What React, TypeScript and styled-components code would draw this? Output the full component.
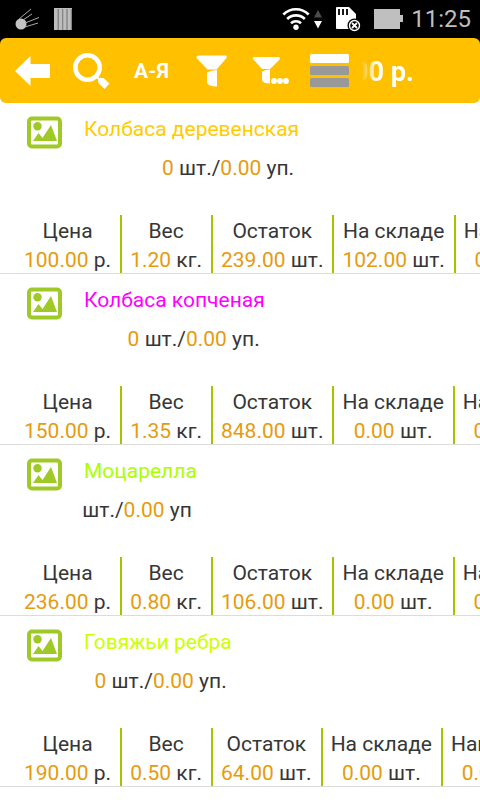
import React from "react";
import styled, { createGlobalStyle } from "styled-components";

const GlobalStyle = createGlobalStyle`
  body {
    margin: 0;
    background: #fff;
    color: #363636;
    font-family: Roboto, "Noto Sans", sans-serif;
    font-size: 21px;
    line-height: 29px;
  }
`;

const Screen = styled.div`
  min-height: 100vh;
  overflow: hidden;
`;

const Backdrop = styled.div`
  background: linear-gradient(#000 50%, #fff 50%);
`;

const StatusBar = styled.header`
  display: flex;
  align-items: center;
  height: 38px;
  padding: 0 9px 0 14px;
  background: #000;
`;

const StatusGroup = styled.div<{ $gap: number; $end?: boolean }>`
  display: flex;
  align-items: center;
  gap: ${(p) => p.$gap}px;
  margin-left: ${(p) => (p.$end ? "auto" : "0")};
`;

const Clock = styled.time`
  color: #bebebe;
  font-size: 24px;
  line-height: 36px;
`;

const Toolbar = styled.nav`
  display: flex;
  align-items: center;
  height: 65px;
  padding-left: 14px;
  border-radius: 6px;
  background: #ffc000;
`;

const ToolButton = styled.button<{ $gap: number }>`
  display: flex;
  align-items: center;
  flex: none;
  margin: 0 ${(p) => p.$gap}px 0 0;
  padding: 0;
  border: 0;
  background: none;
  color: #fff;
  font: bold 21px/30px Roboto, "Noto Sans", sans-serif;
  cursor: pointer;
`;

const Total = styled.output`
  display: flex;
  justify-content: flex-end;
  width: 53px;
  padding-top: 2px;
  overflow: hidden;
  color: #fff;
  font-size: 27px;
  font-weight: bold;
  line-height: 34px;
  white-space: nowrap;
  mask-image: linear-gradient(to right, transparent, #000 16px);
`;

const List = styled.ul`
  margin: 0;
  padding: 0;
  list-style: none;
`;

const Row = styled.li`
  border-bottom: 1px solid #dcdcdc;
`;

const Summary = styled.div`
  display: flex;
  align-items: flex-start;
  gap: 21px;
  height: 100px;
  padding: 12px 0 0 26px;
`;

const PictureButton = styled.button`
  display: block;
  flex: none;
  margin-top: 1px;
  padding: 0;
  border: 0;
  background: none;
  line-height: 0;
  cursor: pointer;
`;

const Info = styled.div`
  display: grid;
  gap: 10px;
`;

const Name = styled.h2<{ $color: string }>`
  margin: 0;
  color: ${(p) => p.$color};
  font-size: inherit;
  font-weight: normal;
  white-space: nowrap;
`;

const Quantity = styled.div`
  display: flex;
  justify-content: flex-end;
  width: 0;
  min-width: 100%;
  padding-right: 5px;
  box-sizing: border-box;
  white-space: pre;
`;

const Stats = styled.dl`
  display: flex;
  margin: 0;
  padding-left: 16px;
  overflow: hidden;
`;

const Stat = styled.div`
  flex: none;
  box-sizing: border-box;
  height: 58px;
  padding: 1px 9px 0 8px;
  text-align: center;
  white-space: nowrap;

  & + & {
    border-left: 2px solid #a4c400;
  }
`;

const Label = styled.dt`
  line-height: 30px;
`;

const Value = styled.dd`
  margin: 0;
`;

const Num = styled.span`
  color: #e69b0e;
`;

const SatelliteIcon = () => (
  <svg width="26" height="24" viewBox="0 0 26 24" fill="none" stroke="#aaa" strokeWidth="1">
    <circle cx="7" cy="17" r="5.5" fill="#c4c4c4" stroke="none" />
    <path d="M5 12 17 2M9 13l9-6M11 16l14-5.500M11 20l13-4" />
  </svg>
);

const BarsIcon = () => (
  <svg width="18" height="23" viewBox="0 0 18 23">
    <path fill="#bdbdbd" d="M0 0h18v22H0z" />
    <path fill="#858585" d="M3.5 1H5v21H3.5zM8 1h1.3v21H8zM12.3 1h1.4v21h-1.4zM16.8 1H18v21h-1.2z" />
  </svg>
);

const WifiIcon = () => (
  <svg width="28" height="24" viewBox="0 0 28 24" fill="none" stroke="#fff" strokeWidth="2.6">
    <path d="M1.3 7.500a18 18 0 0 1 25.400 0M5.200 12a12.500 12.500 0 0 1 17.600 0M9 16.300a7.200 7.200 0 0 1 10 0" />
    <circle cx="14" cy="20.300" r="2.700" fill="#fff" stroke="none" />
  </svg>
);

const TrafficIcon = () => (
  <svg width="8" height="20" viewBox="0 0 8 20">
    <path fill="#4c4c4c" d="M4 1l4 7.500H0z" />
    <path fill="#fff" d="M4 19.500L0 12h8z" />
  </svg>
);

const CardIcon = () => (
  <svg width="26" height="26" viewBox="0 0 26 26">
    <path fill="#fff" d="M2 1h12l7 7v15H2a1 1 0 0 1-1-1V2a1 1 0 0 1 1-1z" />
    <path stroke="#000" strokeWidth="1.800" d="M4 3v6M8 3v6M12 3v6" />
    <circle cx="19.500" cy="19.500" r="7" fill="#000" />
    <circle cx="19.500" cy="19.500" r="5" fill="#000" stroke="#fff" strokeWidth="1.400" />
    <path stroke="#fff" strokeWidth="1.800" d="M17 17l5 5M22 17l-5 5" />
  </svg>
);

const BatteryIcon = () => (
  <svg width="29" height="20" viewBox="0 0 29 20">
    <path fill="#bfbfbf" d="M0 0h26v6h3v7h-3v7H0z" />
  </svg>
);

const BackIcon = () => (
  <svg width="36" height="32" viewBox="0 0 36 32">
    <path fill="#fff" d="M1 16 16.500 1v8H36v14H16.500v8z" />
  </svg>
);

const SearchIcon = () => (
  <svg width="38" height="38" viewBox="0 0 38 38">
    <circle cx="15.500" cy="15.500" r="12.200" fill="none" stroke="#fff" strokeWidth="4.600" />
    <path stroke="#fff" strokeWidth="2" d="m24 24 5 5" />
    <path fill="#fff" d="M26 28.500q0-2 2-2.500h3.500l6 5.500-5 5.500-6-6z" />
  </svg>
);

const FilterIcon = () => (
  <svg width="32" height="32" viewBox="0 0 32 32" fill="#fff">
    <path d="M2 .5h28q1.800 1 .5 2.500L20.500 14.500h-9L.5 3Q0 1.500 2 .5z" />
    <path d="M11 17.500q4-2.500 10-2.500v16.500q-9 0-10-4z" />
  </svg>
);

const FilterMoreIcon = () => (
  <svg width="38" height="30" viewBox="0 0 38 30" fill="#fff">
    <path d="M2 1h25q1.500 1 .5 2.500L18 13h-8L1.500 3.500Q0 2 2 1z" />
    <path d="M10 15.500q4-2 8-2v14q-7 0-8-3.500z" />
    <circle cx="22" cy="25" r="2.900" />
    <circle cx="28" cy="25" r="2.900" />
    <circle cx="34" cy="25" r="2.900" />
  </svg>
);

const RowsIcon = () => (
  <svg width="39" height="34" viewBox="0 0 39 34">
    <rect width="39" height="9" y="0" rx="1.500" fill="#fff" />
    <rect width="39" height="9" y="12" rx="1.500" fill="#999" />
    <rect width="39" height="9" y="24" rx="1.500" fill="#999" />
  </svg>
);

const PictureIcon = () => (
  <svg width="37" height="33" viewBox="0 0 37 33" fill="#9fc926">
    <rect x="3" y="2.500" width="31" height="28" rx="3" fill="#fff" stroke="#9fc926" strokeWidth="4" />
    <circle cx="11.500" cy="10.300" r="4.200" />
    <path d="m7 25 5.500-8 4 5L25 9l6 16z" />
  </svg>
);

type Unit = [value: string, unit: string];

interface Product {
  name: string;
  color: string;
  pieces: string;
  packUnit: string;
  stats: { label: string; value: Unit }[];
}

const makeStats = (price: string, weight: string, rest: string, stock: string) => [
  { label: "Цена", value: [price, "р."] as Unit },
  { label: "Вес", value: [weight, "кг."] as Unit },
  { label: "Остаток", value: [rest, "шт."] as Unit },
  { label: "На складе", value: [stock, "шт."] as Unit },
  { label: "Наценка", value: ["0.00", "р."] as Unit },
];

const products: Product[] = [
  { name: "Колбаса деревенская", color: "#ffcc00", pieces: "0", packUnit: "уп.", stats: makeStats("100.00", "1.20", "239.00", "102.00") },
  { name: "Колбаса копченая", color: "#ff00ff", pieces: "0", packUnit: "уп.", stats: makeStats("150.00", "1.35", "848.00", "0.00") },
  { name: "Моцарелла", color: "#aaff00", pieces: "", packUnit: "уп", stats: makeStats("236.00", "0.80", "106.00", "0.00") },
  { name: "Говяжьи ребра", color: "#ccff00", pieces: "0", packUnit: "уп.", stats: makeStats("190.00", "0.50", "64.00", "0.00") },
];

const ProductRow = ({ product }: { product: Product }) => (
  <Row>
    <Summary>
      <PictureButton type="button" aria-label={product.name}>
        <PictureIcon />
      </PictureButton>
      <Info>
        <Name $color={product.color}>{product.name}</Name>
        <Quantity>
          {product.pieces && <Num>{product.pieces} </Num>}
          <span>шт./</span>
          <Num>0.00</Num>
          <span> {product.packUnit}</span>
        </Quantity>
      </Info>
    </Summary>
    <Stats>
      {product.stats.map(({ label, value }) => (
        <Stat key={label}>
          <Label>{label}</Label>
          <Value>
            <Num>{value[0]}</Num> {value[1]}
          </Value>
        </Stat>
      ))}
    </Stats>
  </Row>
);

export default function App() {
  return (
    <Screen>
      <GlobalStyle />
      <StatusBar>
        <StatusGroup $gap={14}>
          <SatelliteIcon />
          <BarsIcon />
        </StatusGroup>
        <StatusGroup $gap={13} $end>
          <StatusGroup $gap={4}>
            <WifiIcon />
            <TrafficIcon />
          </StatusGroup>
          <CardIcon />
          <StatusGroup $gap={8}>
            <BatteryIcon />
            <Clock>11:25</Clock>
          </StatusGroup>
        </StatusGroup>
      </StatusBar>
      <Backdrop>
        <Toolbar>
          <ToolButton type="button" aria-label="Назад" $gap={22}><BackIcon /></ToolButton>
          <ToolButton type="button" aria-label="Поиск" $gap={24}><SearchIcon /></ToolButton>
          <ToolButton type="button" $gap={27}>А-Я</ToolButton>
          <ToolButton type="button" aria-label="Фильтр" $gap={24}><FilterIcon /></ToolButton>
          <ToolButton type="button" aria-label="Ещё фильтры" $gap={20}><FilterMoreIcon /></ToolButton>
          <ToolButton type="button" aria-label="Вид списка" $gap={12}><RowsIcon /></ToolButton>
          <Total>0.00 р.</Total>
        </Toolbar>
      </Backdrop>
      <List>
        {products.map((product) => (
          <ProductRow key={product.name} product={product} />
        ))}
      </List>
    </Screen>
  );
}
